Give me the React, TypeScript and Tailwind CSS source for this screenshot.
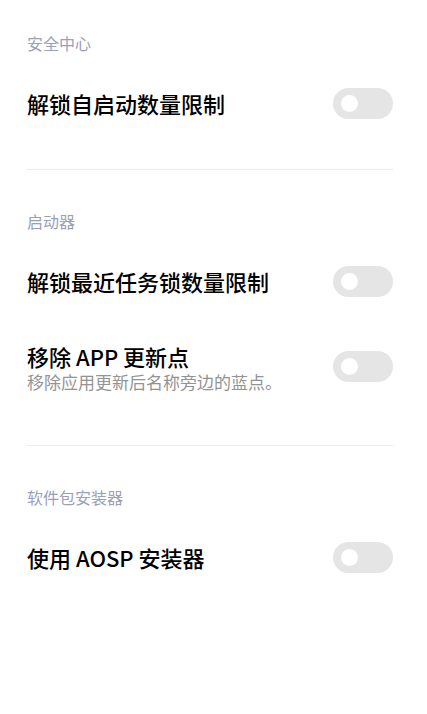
import React from "react";

const font = { fontFamily: '"Noto Sans CJK SC", "Noto Sans", sans-serif' };

function Toggle() {
  return (
    <div className="flex h-[31px] w-[60px] shrink-0 items-center rounded-full bg-[#e5e5e5] pl-[8px]">
      <div className="h-[17px] w-[17px] rounded-full bg-white" />
    </div>
  );
}

function Header({ text }: { text: string }) {
  return <div className="mb-[13px] text-[16px] leading-[22px] text-[#9a9fbb]">{text}</div>;
}

function Row({ title, sub }: { title: string; sub?: string }) {
  if (sub) {
    return (
      <div className="flex items-center justify-between pt-[24px] pb-[23px]">
        <div className="flex flex-col">
          <div className="text-[22px] font-medium leading-[30px] text-black">{title}</div>
          <div className="text-[17px] leading-[22px] text-[#939393]">{sub}</div>
        </div>
        <div className="mt-[-1px]">
          <Toggle />
        </div>
      </div>
    );
  }
  return (
    <div className="flex h-[72px] items-center justify-between">
      <div className="text-[22px] font-medium leading-[30px] text-black">{title}</div>
      <Toggle />
    </div>
  );
}

export default function App() {
  return (
    <div className="min-h-[714px] w-full bg-white pl-[27px] pr-[34px]" style={font}>
      <div className="pt-[32px] pb-[30px]">
        <Header text="安全中心" />
        <Row title="解锁自启动数量限制" />
      </div>
      <div className="h-px bg-[#ebebeb]" />
      <div className="pt-[40px] pb-[29px]">
        <Header text="启动器" />
        <Row title="解锁最近任务锁数量限制" />
        <Row title="移除 APP 更新点" sub="移除应用更新后名称旁边的蓝点。" />
      </div>
      <div className="h-px bg-[#ebebeb]" />
      <div className="pt-[40px]">
        <Header text="软件包安装器" />
        <div className="mt-[2px]">
          <Row title="使用 AOSP 安装器" />
        </div>
      </div>
    </div>
  );
}
